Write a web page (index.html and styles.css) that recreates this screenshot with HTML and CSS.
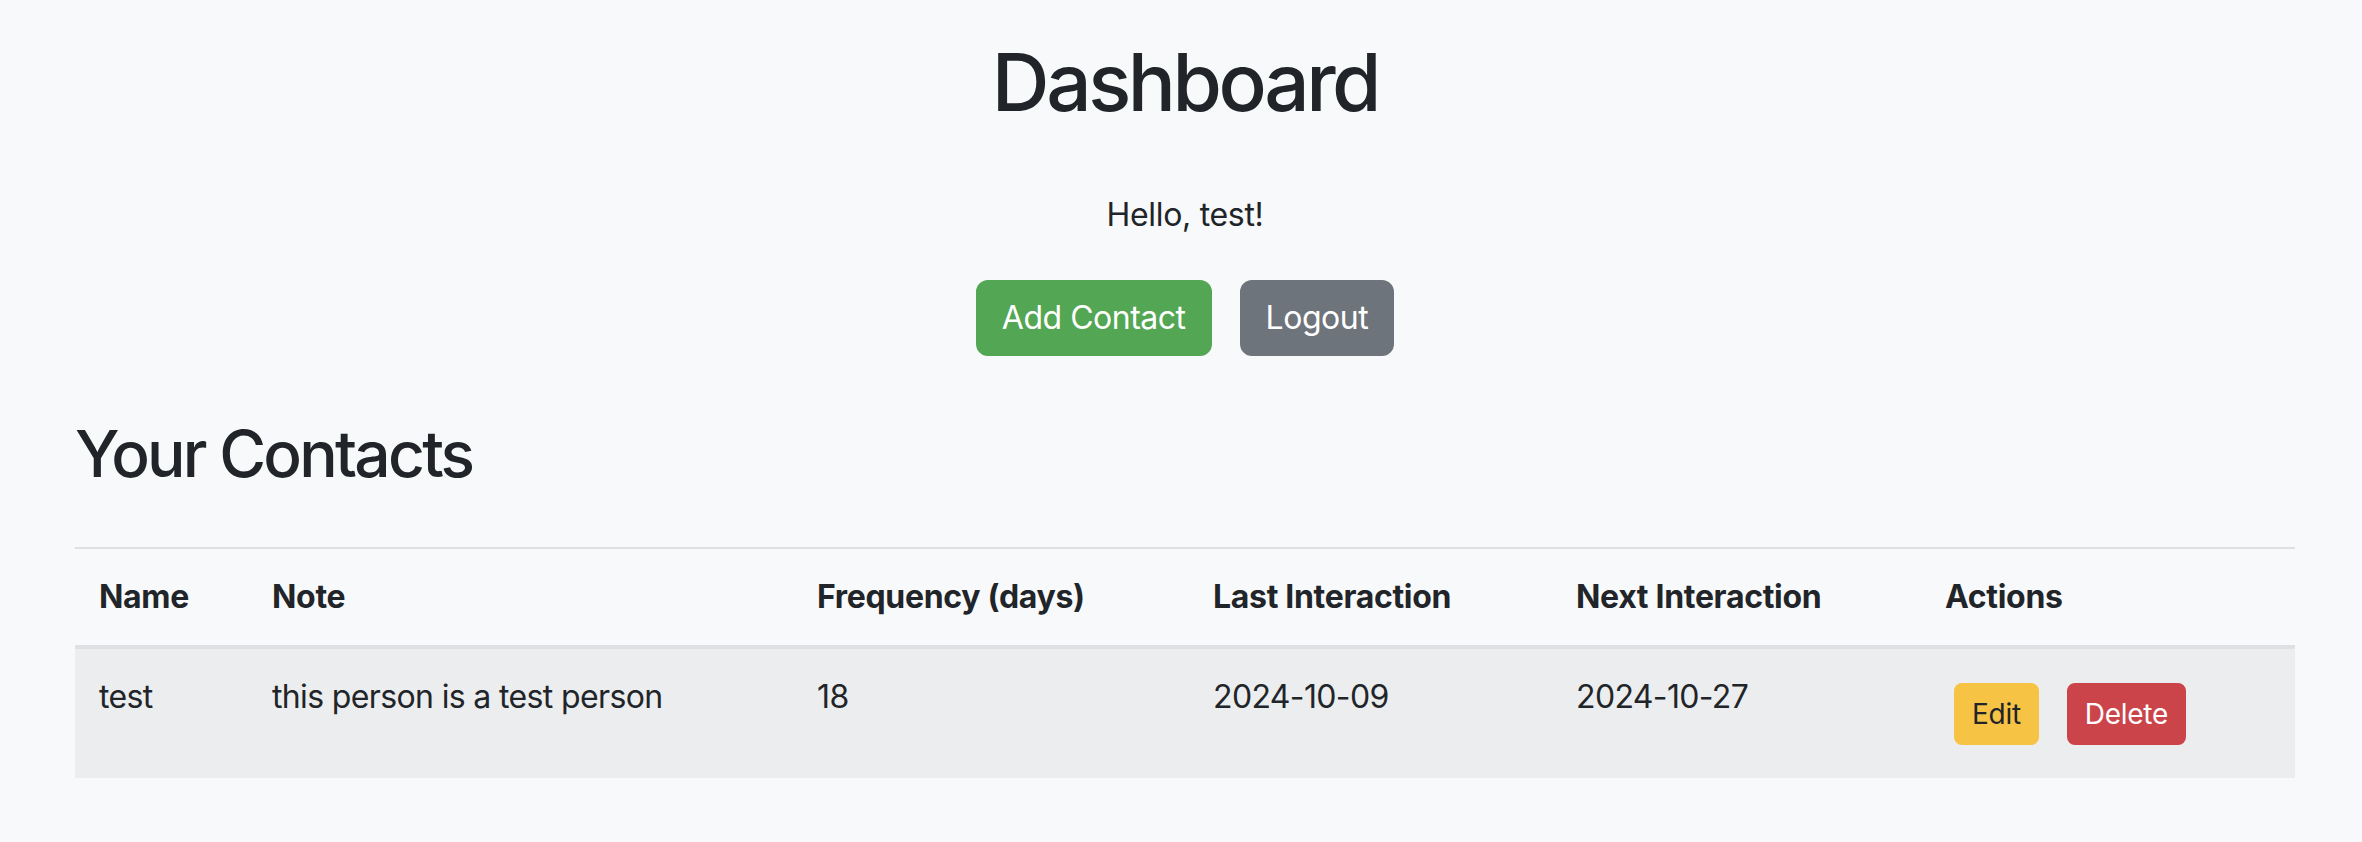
FILE: index.html
```html
<!DOCTYPE html>
<html lang="en">
<head>
<meta charset="utf-8">
<title>Dashboard</title>
<link rel="stylesheet" href="styles.css">
</head>
<body>
<div class="page">
  <header class="intro">
    <h1 class="title">Dashboard</h1>
    <p class="greeting">Hello, test!</p>
    <div class="actions-bar">
      <a class="btn btn-success" href="#">Add Contact</a>
      <a class="btn btn-secondary" href="#">Logout</a>
    </div>
  </header>

  <h2 class="section-title">Your Contacts</h2>

  <table class="contacts">
    <colgroup>
      <col class="c-name">
      <col class="c-note">
      <col class="c-freq">
      <col class="c-last">
      <col class="c-next">
      <col class="c-actions">
    </colgroup>
    <thead>
      <tr>
        <th>Name</th>
        <th>Note</th>
        <th>Frequency (days)</th>
        <th>Last Interaction</th>
        <th>Next Interaction</th>
        <th>Actions</th>
      </tr>
    </thead>
    <tbody>
      <tr>
        <td>test</td>
        <td>this person is a test person</td>
        <td>18</td>
        <td>2024-10-09</td>
        <td>2024-10-27</td>
        <td class="cell-actions">
          <div class="row-buttons">
            <a class="btn-sm btn-warning" href="#">Edit</a>
            <a class="btn-sm btn-danger" href="#">Delete</a>
          </div>
        </td>
      </tr>
    </tbody>
  </table>
</div>
</body>
</html>
```

FILE: styles.css
```css
* { box-sizing: border-box; }

html, body {
  margin: 0;
  padding: 0;
}

body {
  background: #f8f9fa;
  color: #212529;
  font-family: Inter, "Noto Sans", "Liberation Sans", sans-serif;
  font-size: 32px;
  line-height: 48px;
  letter-spacing: -0.01em;
}

.page {
  padding: 34px 67px 40px 75px;
}

.intro {
  display: flex;
  flex-direction: column;
  align-items: center;
}

.title {
  margin: 0;
  font-size: 80px;
  font-weight: 500;
  line-height: 96px;
  letter-spacing: -0.043em;
}

.greeting {
  margin: 61px 0 0;
}

.actions-bar {
  display: flex;
  gap: 28px;
  margin-top: 41px;
}

.btn {
  display: inline-block;
  font-size: 32px;
  line-height: 48px;
  padding: 12px 24px;
  border: 2px solid transparent;
  border-radius: 12px;
  color: #fff;
  text-decoration: none;
  letter-spacing: -0.015em;
}

.btn-success {
  background: #53a653;
  border-color: #53a653;
}

.btn-secondary {
  background: #6e747c;
  border-color: #6e747c;
}

.section-title {
  margin: 59px 0 0;
  font-size: 64px;
  font-weight: 500;
  line-height: 77px;
  letter-spacing: -0.043em;
}

.contacts {
  width: 100%;
  margin-top: 55px;
  border-collapse: collapse;
  table-layout: fixed;
  border-top: 2px solid #dfe0e4;
}

.c-name { width: 173px; }
.c-note { width: 545px; }
.c-freq { width: 396px; }
.c-last { width: 363px; }
.c-next { width: 369px; }

.contacts th,
.contacts td {
  padding: 24px;
  text-align: left;
  vertical-align: top;
}

.contacts th {
  font-weight: 700;
  border-bottom: 4px solid #dfe0e4;
}

.contacts td {
  letter-spacing: -0.02em;
}

.contacts tbody tr {
  background: #ecedee;
}

.contacts td.cell-actions {
  padding: 34px 24px 33px 33px;
}

.row-buttons {
  display: flex;
  gap: 28px;
}

.btn-sm {
  display: inline-block;
  font-size: 28px;
  line-height: 42px;
  padding: 8px 16px;
  border: 2px solid transparent;
  border-radius: 8px;
  text-decoration: none;
  letter-spacing: -0.01em;
}

.btn-warning {
  background: #f6c344;
  border-color: #f6c344;
  color: #212529;
}

.btn-danger {
  background: #cb444a;
  border-color: #cb444a;
  color: #fff;
}
```
